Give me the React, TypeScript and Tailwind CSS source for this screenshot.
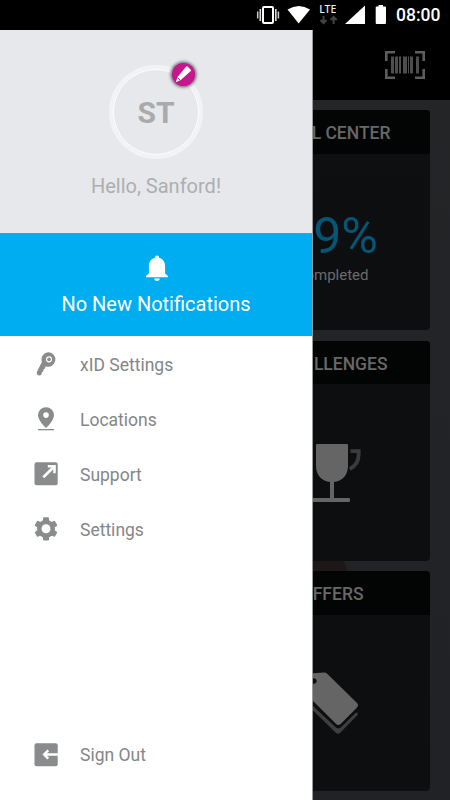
import React from 'react';

const KeyIcon = () => (
  <svg className="h-6 w-6" viewBox="0 0 24 24" fill="none">
    <path d="M14.8.3a7.200 7.200 0 0 0-6.900 9.600L3.200 19.200c-.8 1.400-.5 2.700.3 3.500.9.8 2.500 1 3.600.1.500-.4.800-1 .6-1.700l.3-1.200 1.300-.5.2-1.900 1.500-.9.3-1.900 1.300-.2A7.200 7.200 0 1 0 14.800.3Z" fill="#8a8b8d" />
    <circle cx="15" cy="7.300" r="2.500" stroke="#fff" strokeWidth="1.200" />
  </svg>
);

const PinIcon = () => (
  <svg className="h-6 w-6" viewBox="0 0 24 24" fill="#8a8b8d">
    <path fillRule="evenodd" d="M12 .3a7.900 7.900 0 0 0-8 7.900c0 5.300 8 12.800 8 12.800s8-7.500 8-12.800A7.900 7.900 0 0 0 12 .3Zm0 5a2.800 2.800 0 1 1 0 5.600 2.800 2.800 0 0 1 0-5.600Z" />
    <path d="M4 22h16v1.300H4z" />
  </svg>
);

const SupportIcon = () => (
  <svg className="h-6 w-6" viewBox="0 0 24 24" fill="none">
    <rect x=".5" y=".3" width="23.200" height="23" rx="2" fill="#8a8b8d" />
    <path d="M9.300 15.300 20 4.800" stroke="#fff" strokeWidth="2.600" />
    <path d="M13.800 4.200H20.500v7" stroke="#fff" strokeWidth="2.600" />
  </svg>
);

const GearIcon = () => (
  <svg className="h-6 w-6" viewBox="0 0 24 24" fill="none">
    <g fill="#8a8b8d">
      <circle cx="12" cy="11.800" r="9" />
      <rect x="9" y=".2" width="6" height="23.200" rx="1.200" />
      <rect x="9" y=".2" width="6" height="23.200" rx="1.200" transform="rotate(60 12 11.800)" />
      <rect x="9" y=".2" width="6" height="23.200" rx="1.200" transform="rotate(120 12 11.800)" />
    </g>
    <circle cx="12" cy="11.800" r="4.500" fill="#fff" />
  </svg>
);

const SignOutIcon = () => (
  <svg className="h-6 w-6" viewBox="0 0 24 24" fill="none">
    <rect x=".5" y=".3" width="23.200" height="23" rx="2" fill="#8a8b8d" />
    <path d="M10 11.500H24M14.300 7.300 10.100 11.500l4.200 4.200" stroke="#fff" strokeWidth="2.400" />
  </svg>
);

const CupIcon = () => (
  <svg className="h-[60px] w-[50px]" viewBox="0 0 50 60" fill="none">
    <path d="M4 0h30q1 0 1 1v21c0 9-6 15.500-14 16v16h15q1 0 1 1v2q0 1-1 1H0v-4h17V38C9 37.500 3 31 3 22V1q0-1 1-1Z" fill="#656565" />
    <path d="M37.500 7.200h8.200v3c0 7-3.200 11.800-9 14.800" stroke="#3b3b3b" strokeWidth="3.800" />
  </svg>
);

const TagsIcon = () => (
  <svg className="h-[64px] w-[46px]" viewBox="0 0 46 64" fill="none">
    <path d="M0 34 23 55.500q2.500 1.700 4.800 0L43 40.500q2.500 0 1.500 2.500L27.200 60.800q-2.200 2-4.400 0L0 38.500Z" fill="#3f3f3f" />
    <path d="M0 1.300 11 .4q2 0 3.200 1.300L44 31q2 2.200 0 4.400L27.700 51.900q-2.300 2-4.600 0L0 29V11.500a2.700 2.700 0 1 0 0-5Z" fill="#656565" />
  </svg>
);

const menu = [
  { label: 'xID Settings', icon: KeyIcon },
  { label: 'Locations', icon: PinIcon },
  { label: 'Support', icon: SupportIcon },
  { label: 'Settings', icon: GearIcon }
];

const StatusBar = () => (
  <div className="flex h-[30px] shrink-0 items-center bg-black text-white">
    <svg className="ml-[256px] h-[30px] w-[136px]" viewBox="0 0 136 30" fill="none">
      {/* Vibrate */}
      <rect x="7" y="6.900" width="10" height="16.200" rx="1" stroke="#fff" strokeWidth="2" />
      <path d="M4.300 9v12M19.800 9v12" stroke="#ddd" strokeWidth="1.600" />
      <path d="M1.700 11.500v7M22.400 11.500v7" stroke="#ccc" strokeWidth="1.500" />
      {/* Wifi */}
      <path d="M31.500 9.500Q43 2.500 54 9.500L42.700 23.500Z" fill="#fff" />
      {/* Data arrows */}
      <path d="M67.500 16v7M64.500 20l3 3 3-3M77.600 24v-7M74.600 20l3-3 3 3" stroke="#444" strokeWidth="2" />
      {/* Signal */}
      <path d="M89 24 109 5.500V24Z" fill="#fff" />
      {/* Battery */}
      <path d="M122.500 5h4.500v1.600h2.200q.8 0 .8.800V23q0 1-1 1h-8.300q-1 0-1-1V7.400q0-.8.800-.8h2Z" fill="#fff" />
      <text x="63.200" y="13.300" fill="#eee" className="font-['Noto_Sans',sans-serif] text-[10.500px] font-medium">LTE</text>
    </svg>
    <span className="ml-[4px] pt-px font-['Roboto',sans-serif] text-[17.500px] font-medium">08:00</span>
  </div>
);

const Barcode = () => (
  <svg className="h-7 w-10" viewBox="0 0 40 28" fill="none">
    <path d="M10 1.300H1.300V10M30 1.300h8.700V10M10 26.700H1.300V18M30 26.700h8.700V18" stroke="#5d5d5d" strokeWidth="2.600" />
    <g fill="#4d4d4d">
      <rect x="6" y="5.500" width="3" height="17" />
      <rect x="10" y="5.500" width="3" height="17" />
      <rect x="14" y="5.500" width="2" height="17" />
      <rect x="18" y="5.500" width="4" height="17" />
      <rect x="23" y="5.500" width="1" height="17" />
      <rect x="25" y="5.500" width="3" height="17" />
      <rect x="31" y="5.500" width="3" height="17" />
    </g>
  </svg>
);

type CardProps = {
  title: string;
  titleClass: string;
  children: React.ReactNode;
};

const Card = ({ title, titleClass, children }: CardProps) => (
  <section className="h-[220px] w-[117px] overflow-hidden rounded-r-[4px] bg-[#0d0e0f]/95">
    <h2 className={`flex h-[43.500px] items-center justify-end bg-[#030404] pt-[3px] text-[17.500px] font-medium whitespace-nowrap text-[#686868] ${titleClass}`}>
      {title}
    </h2>
    {children}
  </section>
);

const App: React.FC = () => {
  return (
    <div className="flex h-[800px] w-[450px] flex-col overflow-hidden bg-black font-['Roboto',sans-serif]">
      <StatusBar />
      <div className="flex min-h-0 flex-1">
        {/* Drawer */}
        <aside className="flex w-[313px] shrink-0 flex-col border-r border-[#9a9b9d] bg-white">
          <div className="flex h-[203px] shrink-0 flex-col items-center bg-[#e7e8ec] pt-[35px]">
            <div className="relative flex h-[94px] w-[94px] items-center justify-center rounded-full border-[4px] border-[#f2f3f5]">
              <div className="flex h-full w-full items-center justify-center rounded-full border border-white text-[30px] font-bold text-[#a9aaab]">
                ST
              </div>
              <div className="absolute -top-[6.500px] right-[4.500px] flex h-[23px] w-[23px] items-center justify-center rounded-full bg-[#c6168d] shadow-[0_0_3px_1.500px_rgba(0,0,0,0.5)]">
                <svg className="h-[19px] w-[19px]" viewBox="0 0 19 19" fill="none">
                  <path d="m13.300 1.300 3.500 3.400q.6.600 0 1.300L6.800 15 1.800 17.200l1.700-5.300L12.200 1.500q.6-.6 1.100-.2Z" fill="#fff" />
                  <path d="m3.600 12.700 2.600 2.400" stroke="#c6168d" />
                </svg>
              </div>
            </div>
            <p className="mt-[13px] text-[20px] leading-[28px] text-[#adaeaf]">Hello, Sanford!</p>
          </div>

          <div className="flex h-[103px] shrink-0 flex-col items-center border-t border-[#3aa4d0] bg-[#00adf0] pt-[21px] text-white">
            <svg className="ml-[2px] h-[27px] w-[24px]" viewBox="0 0 24 27" fill="currentColor">
              <path d="M12 .5a2 2 0 0 0-2 2v.3C6.200 3.700 3.900 6.900 3.900 11v7.500L1 21v1.300h22V21l-2.900-2.500V11c0-4.100-2.300-7.300-6.100-8.200v-.3a2 2 0 0 0-2-2ZM9.300 23.500a2.700 2.400 0 0 0 5.400 0Z" />
            </svg>
            <p className="mt-[8px] text-[20px] leading-[28px]">No New Notifications</p>
          </div>

          <nav className="flex flex-col">
            {menu.map((item) => {
              const Icon = item.icon;
              return (
                <a key={item.label} className="flex h-[55px] items-center gap-[22px] pl-[34px] text-[17.500px] text-[#858688]">
                  <Icon />
                  <span className="pt-[4px]">{item.label}</span>
                </a>
              );
            })}
          </nav>

          <a className="mt-auto mb-[18px] flex h-[55px] items-center gap-[22px] pl-[34px] text-[17.500px] text-[#858688]">
            <SignOutIcon />
            <span className="pt-[2px]">Sign Out</span>
          </a>
        </aside>

        {/* Dimmed dashboard */}
        <main className="flex min-w-0 flex-1 flex-col overflow-hidden">
          <header className="flex h-[70px] shrink-0 items-center justify-end bg-black pr-[25px]">
            <Barcode />
          </header>
          <div className="relative flex flex-1 flex-col bg-linear-to-b from-[#242527] to-[#212226] pt-[10px]">
            <svg className="absolute top-0 left-0 h-[700px] w-[137px]" viewBox="0 0 137 700">
              <path d="M0 400H13L31 462Q42 485 42 540V570Q40 582 20 584H0Z" fill="#1d1817" />
            </svg>
            <div className="relative flex flex-col gap-[10.500px]">
              <Card title="L CENTER" titleClass="pr-[39.500px]">
                <p className="mt-[54px] flex justify-end pr-[52px] text-[50px] leading-[56px] text-[#035676]">9%</p>
                <p className="flex justify-end pr-[61.500px] pt-px text-[15px] leading-[20px] text-[#6b6b6b]">ompleted</p>
              </Card>
              <Card title="LLENGES" titleClass="pr-[42.500px]">
                <div className="pt-[59.500px]">
                  <CupIcon />
                </div>
              </Card>
              <Card title="FFERS" titleClass="pr-[66.500px]">
                <div className="pt-[57.500px]">
                  <TagsIcon />
                </div>
              </Card>
            </div>
          </div>
        </main>
      </div>
    </div>
  );
};

export default App;
